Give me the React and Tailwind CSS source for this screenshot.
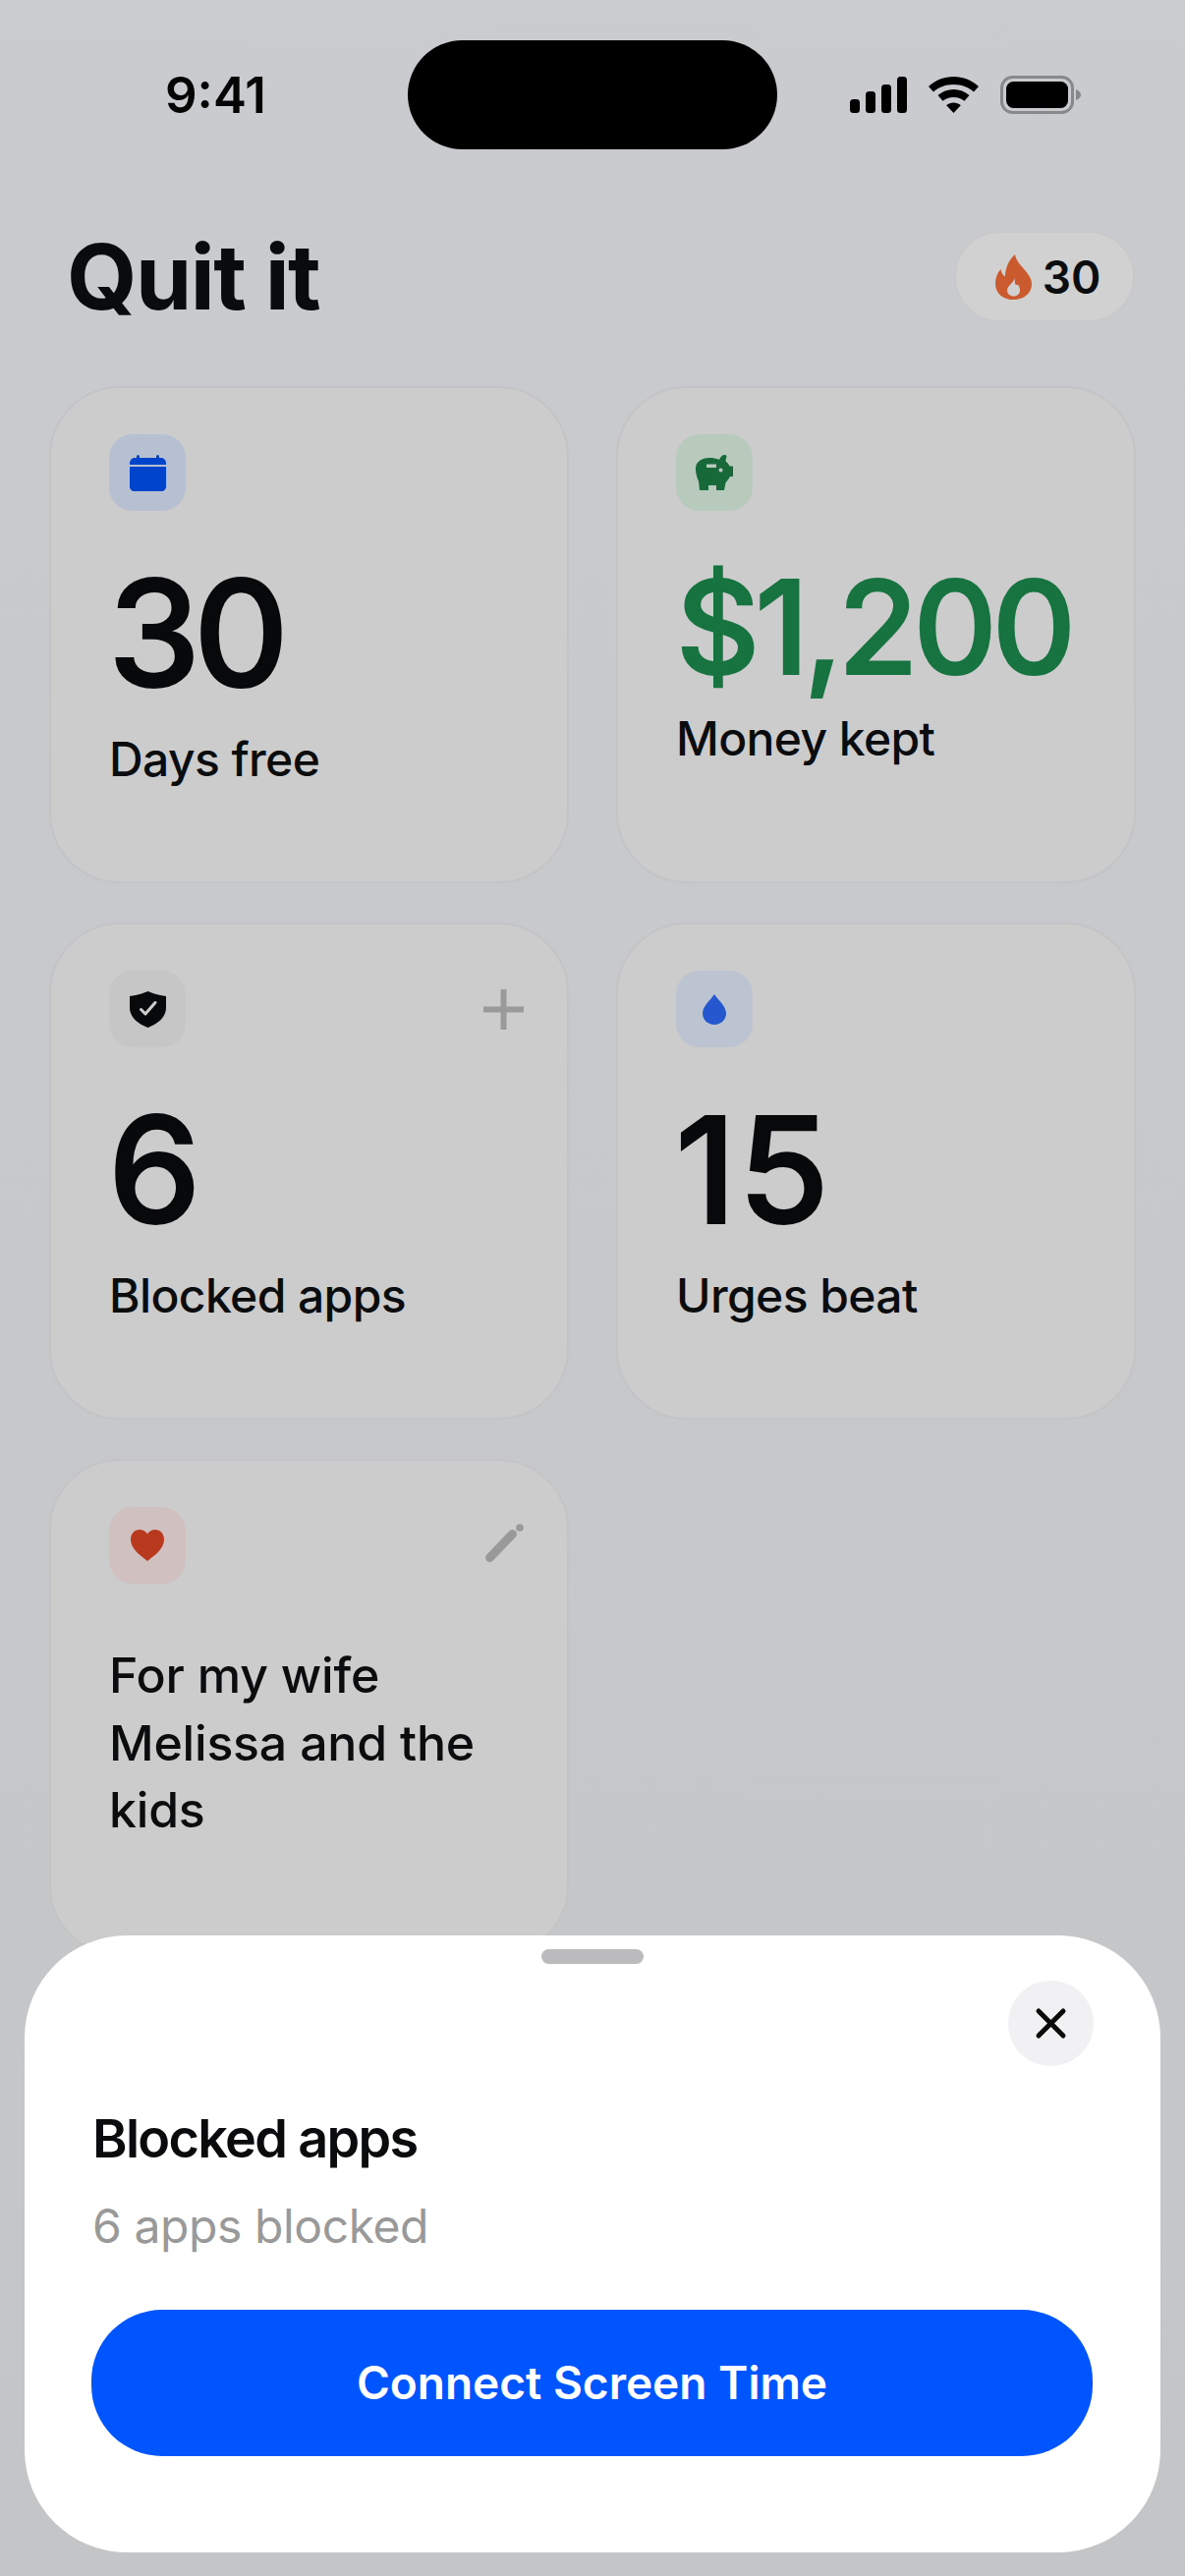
const inter = "font-['Inter',sans-serif]";

function Signal() {
  return (
    <svg width="58" height="37" viewBox="0 0 58 37" fill="#000">
      <rect x="0" y="23" width="10" height="14" rx="3.5" />
      <rect x="16" y="15" width="10" height="22" rx="3.5" />
      <rect x="32" y="8" width="10" height="29" rx="3.5" />
      <rect x="48" y="0" width="10" height="37" rx="3.5" />
    </svg>
  );
}

function Wifi() {
  return (
    <svg width="51" height="37" viewBox="0 0 51 37" fill="#000">
      <path d="M25.500 0C35 0 44 3.500 51 10L46 15.500C40.500 10.700 33.500 8 25.500 8C17.500 8 10.500 10.700 5 15.500L0 10C7 3.500 16 0 25.500 0Z" />
      <path d="M25.500 13C31.500 13 37 15.200 41.500 19L36.500 24.800C33.500 22.300 29.800 21 25.500 21C21.200 21 17.500 22.300 14.500 24.800L9.500 19C14 15.200 19.500 13 25.500 13Z" />
      <path d="M25.500 26.500C28.300 26.500 30.700 27.500 32.800 29.200L25.500 37L18.200 29.200C20.300 27.500 22.700 26.500 25.500 26.500Z" />
    </svg>
  );
}

function Battery() {
  return (
    <svg width="82" height="39" viewBox="0 0 82 39">
      <rect x="1.500" y="1.500" width="72" height="36" rx="11" fill="none" stroke="#86888a" strokeWidth="3" />
      <rect x="6" y="6" width="63" height="27" rx="7.500" fill="#000" />
      <path d="M77 14C80 15 82 17 82 19.500C82 22 80 24 77 25Z" fill="#86888a" />
    </svg>
  );
}

function Flame() {
  return (
    <svg width="37" height="46" viewBox="0 0 37 46" fill="#cb5a2e">
      <path fillRule="evenodd" d="M20 0C21 6 25 10 30 16C34.500 21 37 25.500 37 30C37 39.500 29 46 18.500 46C8 46 0 39.500 0 30C0 24 2 19 5.500 15C6 18.500 7.500 21 10 22.500C10 14 13.500 6 20 0ZM19.500 24C19 29 12 31.500 12 36.500C12 40 15 42.500 18.500 42.500C22.500 42.500 25 40 25 36.500C25 34 24 32.500 23 30.500C21.500 31.500 20.500 31 20 29.500C19.700 27.500 20 26 19.500 24Z" />
    </svg>
  );
}

function Calendar() {
  return (
    <svg width="37" height="37" viewBox="0 0 37 37" fill="#0044cc">
      <rect x="7" y="0" width="3" height="5" rx="1.500" />
      <rect x="27" y="0" width="3" height="5" rx="1.500" />
      <path d="M0 9C0 5.500 2 3 5 3H32C35 3 37 5.500 37 9V10H0Z" />
      <path d="M0 12H37V32C37 35 35 37 32 37H5C2 37 0 35 0 32Z" />
    </svg>
  );
}

function Piggy() {
  return (
    <svg width="38" height="36" viewBox="0 0 38 36" fill="#17693a">
      <path fillRule="evenodd" d="M4 36L3 27C1 23 0 18 0 14C0 7 6 3 14 3C17 3 21 3.500 24 5C25 2 27 0 29.500 0C31.500 0 32 1.500 31 3.500L30.500 6.500C32.500 8 33.500 9.500 34.500 11.500H38V22H35C33.500 25 31.500 27 30.500 28.500L29 36H21V31H13V36ZM11 9.500V13H21V9.500ZM25.500 13.500A2 2 0 1 0 25.600 17.500A2 2 0 1 0 25.500 13.500Z" />
    </svg>
  );
}

function Shield() {
  return (
    <svg width="37" height="37" viewBox="0 0 37 37">
      <path d="M18.500 0L25 2.500C29 3.800 33 4.500 37 5V17C37 26 29 33 18.500 37C8 33 0 26 0 17V5C4 4.500 8 3.800 12 2.500Z" fill="#08090b" />
      <path d="M11.500 18.500L16 23L26 11.500" fill="none" stroke="#cfcfcf" strokeWidth="3" strokeLinecap="round" strokeLinejoin="round" />
    </svg>
  );
}

function Drop() {
  return (
    <svg width="24" height="31" viewBox="0 0 24 31" fill="#2558cf">
      <path d="M12 0C15 5 24 12 24 19.500C24 26 18.500 31 12 31C5.500 31 0 26 0 19.500C0 12 9 5 12 0Z" />
    </svg>
  );
}

function Heart() {
  return (
    <svg width="34" height="32" viewBox="0 0 34 32" fill="#b8391e">
      <path d="M17 32C11 27 0 20 0 10C0 4 4 0 9 0C12.500 0 15.500 1.500 17 4.500C18.500 1.500 21.500 0 25 0C30 0 34 4 34 10C34 20 23 27 17 32Z" />
    </svg>
  );
}

function Plus() {
  return (
    <svg width="41" height="41" viewBox="0 0 41 41" fill="#9a9a9a">
      <rect x="17.500" y="0" width="6" height="41" />
      <rect x="0" y="17.500" width="41" height="6" />
    </svg>
  );
}

function Pen() {
  return (
    <svg width="39" height="39" viewBox="0 0 39 39" className="-translate-y-[3px]">
      <path d="M4.500 34.500L27.500 10.500" fill="none" stroke="#999999" strokeWidth="9" strokeLinecap="round" />
      <circle cx="35" cy="4" r="3.800" fill="#999999" />
    </svg>
  );
}

function Card({ icon, iconBg, action, children }) {
  return (
    <div className="h-[506px] rounded-[72px] border-2 border-[#c3c4c5] bg-[#cccccc] pt-[47px] pl-[59px] pr-[44px]">
      <div className="flex h-[78px] items-center justify-between">
        <div className={`flex h-[78px] w-[78px] items-center justify-center rounded-[24px] ${iconBg}`}>{icon}</div>
        {action}
      </div>
      {children}
    </div>
  );
}

function Stat({ value, tracking }) {
  return <div className={`mt-[50px] -ml-[1px] text-[150px] leading-[150px] font-medium text-[#08090b] [-webkit-text-stroke:2px_currentColor] ${tracking}`}>{value}</div>;
}

function Label({ children }) {
  return <div className="mt-[23px] text-[48px] leading-[60px] font-medium tracking-[-0.6px] text-[#0b0c0e]">{children}</div>;
}

export default function App() {
  return (
    <div className={`relative h-[2622px] w-[1206px] overflow-hidden bg-gradient-to-b from-[#c9cbce] to-[#c4c5c7] ${inter}`}>
      <div className="grid grid-cols-[415px_376px_415px] pt-[41px]">
        <div className="flex h-[111px] items-center pl-[168px] text-[51px] leading-none font-semibold text-[#050505]">9:41</div>
        <div className="h-[111px] rounded-[56px] bg-black" />
        <div className="flex h-[111px] items-center gap-[22px] pl-[74px]">
          <Signal />
          <Wifi />
          <Battery />
        </div>
      </div>

      <div className="mt-[83px] flex h-[93px] items-center justify-between pr-[51px] pl-[68px]">
        <h1 className="text-[92px] leading-none font-bold tracking-[-1.500px] text-[#0a0b0d]">Quit it</h1>
        <div className="flex h-[93px] w-[184px] items-center justify-center gap-[11px] rounded-full border-2 border-[#c8c9ca] bg-[#d1d1d1] pl-[7px]">
          <Flame />
          <span className="text-[46px] leading-none font-semibold text-[#0c0d0f]">30</span>
        </div>
      </div>

      <div className="mt-[65px] grid grid-cols-[529px_529px] gap-x-[48px] gap-y-[40px] px-[50px]">
        <Card icon={<Calendar />} iconBg="bg-[#b6c0d1]">
          <Stat value="30" tracking="tracking-[-7px]" />
          <Label>Days free</Label>
        </Card>
        <Card icon={<Piggy />} iconBg="bg-[#b8cabc]">
          <div className="mt-[52px] text-[132px] leading-[132px] font-medium tracking-[-5px] text-[#177441] [-webkit-text-stroke:2px_currentColor]">$1,200</div>
          <div className="mt-[18px] text-[48px] leading-[60px] font-medium tracking-[-0.6px] text-[#0b0c0e]">Money kept</div>
        </Card>
        <Card icon={<Shield />} iconBg="bg-[#c6c6c6]" action={<Plus />}>
          <Stat value="6" tracking="tracking-[-6px]" />
          <Label>Blocked apps</Label>
        </Card>
        <Card icon={<Drop />} iconBg="bg-[#bcc3d1]">
          <Stat value="15" tracking="tracking-[2px]" />
          <Label>Urges beat</Label>
        </Card>
        <Card icon={<Heart />} iconBg="bg-[#d0c1c0]" action={<Pen />}>
          <div className="mt-[59px] text-[50px] leading-[68.500px] font-medium tracking-[-0.2px] text-[#0b0c0e]">
            For my wife
            <br />
            Melissa and the
            <br />
            kids
          </div>
        </Card>
      </div>

      {/* bottom sheet lies over the cards */}
      <div className="absolute top-[1970px] left-[25px] h-[628px] w-[1156px] rounded-[104px] bg-white px-[69px] pt-[14px]">
        <div className="mx-auto h-[15px] w-[104px] rounded-full bg-[#bbbbbe]" />
        <div className="mt-[17px] flex justify-end">
          <div className="mr-[-1px] flex h-[87px] w-[87px] items-center justify-center rounded-full bg-[#f1f1f3]">
            <svg width="33" height="33" viewBox="0 0 33 33" fill="none" stroke="#0a0a0a" strokeWidth="5" strokeLinecap="round">
              <path d="M4 4L29 29M29 4L4 29" />
            </svg>
          </div>
        </div>
        <h2 className="mt-[41px] text-[54px] leading-[66px] font-semibold tracking-[-1.700px] text-[#0a0b0d]">Blocked apps</h2>
        <p className="mt-[26px] text-[48px] leading-[60px] font-normal tracking-[-0.4px] text-[#999999]">6 apps blocked</p>
        <button className="mt-[55px] -ml-[1px] flex h-[149px] w-[1019px] items-center justify-center rounded-[72px] bg-[#0055ff] text-[46px] font-semibold text-white">
          Connect Screen Time
        </button>
      </div>
    </div>
  );
}
